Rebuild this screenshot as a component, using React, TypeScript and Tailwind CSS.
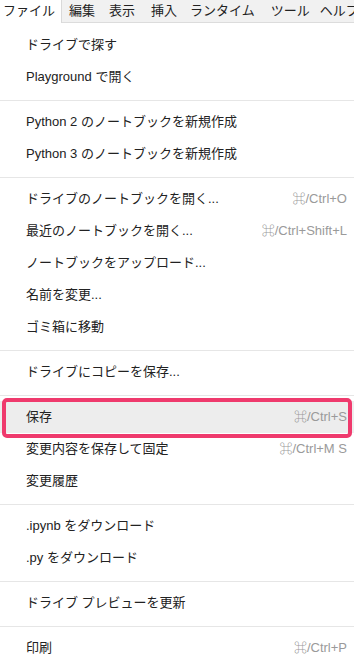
import React from "react";

type Item = { label: string; shortcut?: string; highlight?: boolean } | "divider";

const items: Item[] = [
  { label: "ドライブで探す" },
  { label: "Playground で開く" },
  "divider",
  { label: "Python 2 のノートブックを新規作成" },
  { label: "Python 3 のノートブックを新規作成" },
  "divider",
  { label: "ドライブのノートブックを開く...", shortcut: "⌘/Ctrl+O" },
  { label: "最近のノートブックを開く...", shortcut: "⌘/Ctrl+Shift+L" },
  { label: "ノートブックをアップロード..." },
  { label: "名前を変更..." },
  { label: "ゴミ箱に移動" },
  "divider",
  { label: "ドライブにコピーを保存..." },
  "divider",
  { label: "保存", shortcut: "⌘/Ctrl+S", highlight: true },
  { label: "変更内容を保存して固定", shortcut: "⌘/Ctrl+M S" },
  { label: "変更履歴" },
  "divider",
  { label: ".ipynb をダウンロード" },
  { label: ".py をダウンロード" },
  "divider",
  { label: "ドライブ プレビューを更新" },
  "divider",
  { label: "印刷", shortcut: "⌘/Ctrl+P" },
];

export default function App() {
  return (
    <div
      className="w-[354px] h-[671px] overflow-hidden bg-white text-[#222]"
      style={{ fontFamily: '"Liberation Sans", "Noto Sans CJK JP", sans-serif' }}
    >
      <div className="flex h-[23px] text-[13px] leading-[20px]">
        <div className="w-[62px] bg-white pl-[3px] pt-[1px] border-r border-[#d9d9d9] shrink-0">ファイル</div>
        <div className="flex-1 flex bg-[#f1f1f1] border-b border-[#dcdcdc] pt-[1px] whitespace-nowrap overflow-hidden">
          <span className="ml-[7px]">編集</span>
          <span className="ml-[14px]">表示</span>
          <span className="ml-[16px]">挿入</span>
          <span className="ml-[13px]">ランタイム</span>
          <span className="ml-[16px]">ツール</span>
          <span className="ml-[10px]">ヘルプ</span>
        </div>
      </div>
      <div className="pt-[6px]">
        {items.map((it, i) =>
          it === "divider" ? (
            <div key={i} className="mt-[7px] mb-[5px] h-px bg-[#e6e6e6]" />
          ) : (
            <div
              key={i}
              className={
                "relative flex items-center justify-between h-[32px] pl-[26px] pr-[7px] text-[13px] " +
                (it.highlight ? "bg-[#ededed]" : "")
              }
            >
              <span>{it.label}</span>
              {it.shortcut && <span className="text-[#9a9a9a]">{it.shortcut}</span>}
              {it.highlight && (
                <div className="absolute left-[2px] right-[2px] top-[-3px] bottom-[-5px] border-[4px] border-[#ef3a6d] rounded-[5px]" />
              )}
            </div>
          )
        )}
      </div>
    </div>
  );
}
